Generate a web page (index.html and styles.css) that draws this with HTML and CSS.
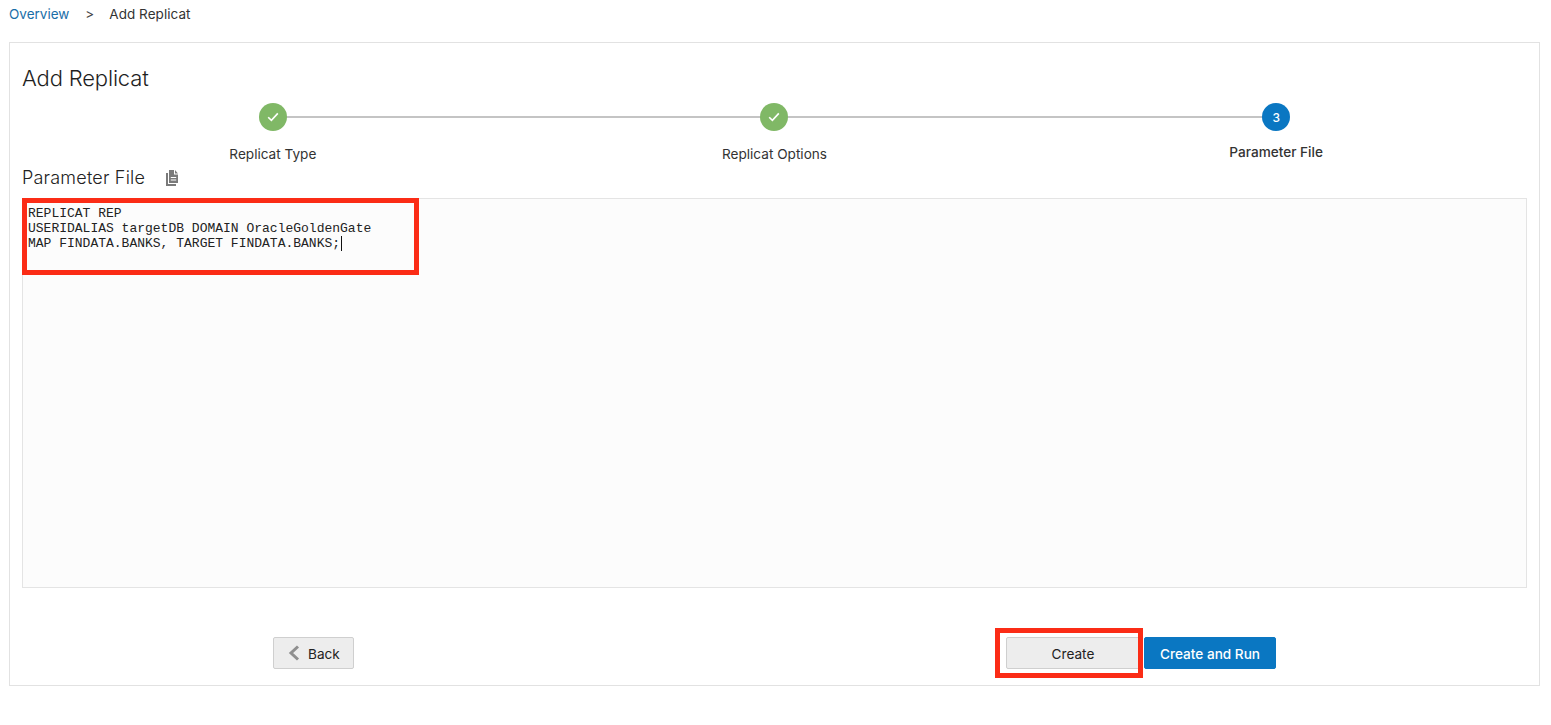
FILE: index.html
```html
<!DOCTYPE html>
<html lang="en">
<head>
<meta charset="utf-8">
<title>Add Replicat</title>
<link rel="stylesheet" href="styles.css">
</head>
<body>
<nav class="crumbs">
  <a class="crumb-link" href="#">Overview</a>
  <span class="crumb-sep">&gt;</span>
  <span class="crumb-current">Add Replicat</span>
</nav>
<main class="panel">
  <h1 class="title">Add Replicat</h1>
  <ol class="steps">
    <li class="step step-done">
      <span class="step-dot"><svg width="12" height="10" viewBox="0 0 12 10"><path d="M1.200 5.200 4.400 8.400 10.800 1.400" fill="none" stroke="#fff" stroke-width="1.600"/></svg></span>
      <span class="step-label">Replicat Type</span>
    </li>
    <li class="step step-done">
      <span class="step-dot"><svg width="12" height="10" viewBox="0 0 12 10"><path d="M1.200 5.200 4.400 8.400 10.800 1.400" fill="none" stroke="#fff" stroke-width="1.600"/></svg></span>
      <span class="step-label">Replicat Options</span>
    </li>
    <li class="step step-current">
      <span class="step-dot">3</span>
      <span class="step-label">Parameter File</span>
    </li>
  </ol>
  <div class="section-head">
    <h2 class="section-title">Parameter File</h2>
    <svg class="copy-icon" width="14" height="16" viewBox="0 0 14 16"><path d="M4 0h5v4.500h4V13H4z M10 0l3 3.500h-3z M1 3h2v11h8v2H1z" fill="#7a7a7a"/><path d="M5.800 7h5.400v1H5.800z M5.800 9.500h5.400v1H5.800z" fill="#fff"/></svg>
  </div>
  <div class="editor">
    <pre class="editor-text">REPLICAT REP
USERIDALIAS targetDB DOMAIN OracleGoldenGate
MAP FINDATA.BANKS, TARGET FINDATA.BANKS;<span class="caret"></span></pre>
    <span class="highlight highlight-text"></span>
  </div>
  <footer class="actions">
    <button class="btn btn-back" type="button">
      <svg width="12" height="16" viewBox="0 0 12 16"><path d="M10 1.500 3 8l7 6.500" fill="none" stroke="#8f8f8f" stroke-width="3"/></svg>
      <span class="btn-label">Back</span>
    </button>
    <div class="actions-right">
      <button class="btn btn-create" type="button"><span class="btn-label">Create</span><span class="highlight highlight-btn"></span></button>
      <button class="btn btn-primary" type="button"><span class="btn-label">Create and Run</span></button>
    </div>
  </footer>
</main>
</body>
</html>
```
FILE: styles.css
```css
* { box-sizing: border-box; }
html, body { height: 100%; }
body {
  margin: 0;
  padding: 0 11px 0 9px;
  background: #fff;
  color: #2b2b2b;
  font-family: Inter, "Noto Sans", sans-serif;
  overflow: hidden;
}
.crumbs {
  display: flex;
  align-items: center;
  height: 42px;
  padding-bottom: 14px;
  font-size: 13.5px;
  line-height: 28px;
}
.crumb-link { color: #1a6ea8; text-decoration: none; }
.crumb-sep { margin: 0 15px 0 16px; color: #444; }
.crumb-current { color: #333; letter-spacing: 0.05px; }
.panel {
  height: 644px;
  border: 1px solid #e2e2e2;
  padding: 0 12px;
}
.title {
  margin: 0;
  padding-top: 20px;
  height: 60px;
  font-size: 22px;
  line-height: 30px;
  font-weight: 300;
  color: #1f1f1f;
  letter-spacing: -0.16px;
}
.steps {
  list-style: none;
  margin: 0;
  padding: 0;
  display: grid;
  grid-template-columns: repeat(3, 1fr);
  height: 74px;
}
.step {
  position: relative;
  display: flex;
  flex-direction: column;
  align-items: center;
}
.step-dot {
  position: relative;
  z-index: 1;
  display: flex;
  align-items: center;
  justify-content: center;
  width: 28px;
  height: 28px;
  border-radius: 50%;
  color: #fff;
  font-size: 12px;
  font-weight: 500;
}
.step-done .step-dot { background: #80b866; }
.step-current .step-dot { background: #0a77c2; }
.step-done::after {
  content: "";
  position: absolute;
  top: 13px;
  left: 50%;
  width: 100%;
  height: 2px;
  background: #c4c4c4;
}
.step-label {
  margin-top: 15px;
  font-size: 13.6px;
  line-height: 16px;
  color: #333;
}
.step-current .step-label { margin-top: 13px; font-weight: 500; }
.section-head {
  display: flex;
  align-items: center;
  gap: 20px;
  height: 24px;
  margin-top: -11px;
  margin-bottom: 8px;
}
.section-title {
  margin: 0;
  font-size: 18px;
  line-height: 24px;
  font-weight: 300;
  color: #222;
  letter-spacing: 0.2px;
}
.editor {
  position: relative;
  height: 390px;
  background: #fcfcfc;
  border: 1px solid #e4e4e4;
  padding: 7px 5px;
}
.editor-text {
  margin: 0;
  font-family: "Liberation Mono", monospace;
  font-size: 13px;
  line-height: 15px;
  color: #222;
}
.caret {
  display: inline-block;
  width: 1px;
  height: 15px;
  margin-left: 1px;
  vertical-align: top;
  background: #111;
}
.highlight {
  position: absolute;
  border: 5px solid #fb2c16;
  pointer-events: none;
}
.highlight-text {
  top: -1px;
  left: -1px;
  width: 397px;
  height: 77px;
}
.actions {
  display: flex;
  justify-content: space-between;
  margin-top: 49px;
  padding: 0 251px 0 251px;
}
.actions-right { display: flex; gap: 4px; }
.btn {
  position: relative;
  height: 32px;
  border-radius: 2px;
  font-family: inherit;
  font-size: 13.6px;
  color: #222;
  padding: 1px 0 0;
}
.btn-back {
  display: inline-flex;
  align-items: center;
  gap: 8px;
  width: 81px;
  padding: 1px 0 0 14px;
  background: #ededed;
  border: 1px solid #cfcfcf;
}
.btn-back svg { margin-top: -1px; }
.btn-create {
  width: 134px;
  background: #ededed;
  border: 1px solid #cfcfcf;
}
.btn-primary {
  width: 132px;
  background: #0a77c2;
  border: 1px solid #0a77c2;
  color: #fff;
  font-weight: 500;
}
.highlight-btn {
  top: -10px;
  left: -12px;
  width: 148px;
  height: 50px;
}
```
